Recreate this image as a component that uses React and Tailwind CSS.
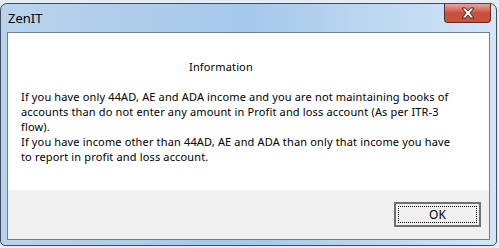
export default function App() {
  const font = { fontFamily: '"Noto Sans", "Liberation Sans", sans-serif' }
  return (
    <div className="w-[499px] h-[248px] bg-[#e4edf6] overflow-hidden" style={font}>
      <div className="mt-[3px] w-[497px] h-[243px] border border-[#3c4e60] rounded-t-[7px] rounded-b-[5px] bg-gradient-to-r from-[#b9d3ec] via-[#a6c8ea] to-[#d2e6f7] flex flex-col pl-[6px] pr-[6px] pb-[5px]">
        <div className="h-[28px] flex items-start justify-between">
          <span className="mt-[6px] ml-[1px] text-[13px] leading-[16px] text-black">ZenIT</span>
          <div className="w-[47px] h-[19px] -mr-[1px] rounded-b-[4px] border border-t-0 border-[#5c2a24] bg-gradient-to-b from-[#e8a699] via-[#c9503f] to-[#c5533c] flex items-center justify-center">
            <svg width="14" height="12" viewBox="0 0 14 12">
              <path
                d="M1 1 L4.5 1 L7 4 L9.5 1 L13 1 L9 6 L13 11 L9.5 11 L7 8 L4.5 11 L1 11 L5 6 Z"
                fill="#ffffff"
                stroke="#4a2320"
                strokeWidth="1"
                strokeLinejoin="round"
              />
            </svg>
          </div>
        </div>
        <div className="flex-1 border border-[#6e7f90] flex flex-col">
          <div className="flex-1 bg-white text-[11px] leading-[15px] tracking-[0.15px] text-black">
            <div className="pt-[26px] pl-[181px]">Information</div>
            <div className="pt-[15px] pl-[13px] whitespace-nowrap">
              <div>If you have only 44AD, AE and ADA income and you are not maintaining books of</div>
              <div>accounts than do not enter any amount in Profit and loss account (As per ITR-3</div>
              <div>flow).</div>
              <div>If you have income other than 44AD, AE and ADA than only that income you have</div>
              <div>to report in profit and loss account.</div>
            </div>
          </div>
          <div className="h-[49px] bg-[#f0f0f0] flex items-center justify-end pr-[8px]">
            <button className="w-[87px] h-[25px] border-2 border-[#707070] bg-[#f0f0f0] p-[2px]">
              <div className="w-full h-full border border-dotted border-black flex items-center justify-center text-[12px] text-black">
                OK
              </div>
            </button>
          </div>
        </div>
      </div>
    </div>
  )
}
